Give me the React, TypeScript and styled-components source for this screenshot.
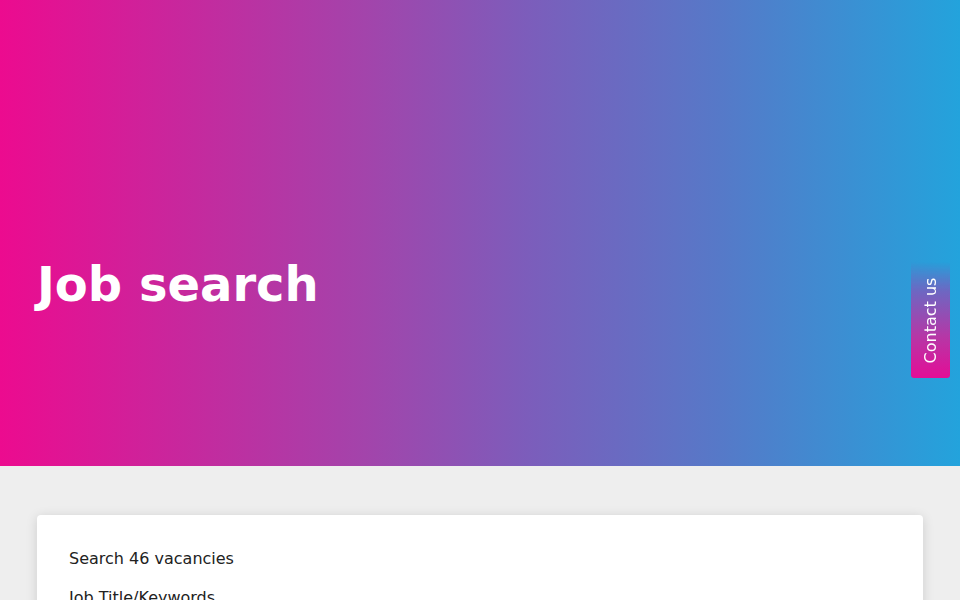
import React from "react";
import styled, { createGlobalStyle } from "styled-components";

const Global = createGlobalStyle`
  html, body { margin: 0; padding: 0; }
  body {
    background: #eeeeee;
    font-family: "DejaVu Sans", sans-serif;
    color: #222;
    overflow: hidden;
  }
`;

const Hero = styled.header`
  height: 466px;
  display: flex;
  align-items: center;
  padding: 0 37px;
  box-sizing: border-box;
  background: linear-gradient(90deg, #ec0b8f 0%, #a344ab 38%, #7c5dbb 55%, #5679c8 75%, #23a3dc 100%);
`;

const Title = styled.h1`
  margin: 0;
  padding-top: 104px;
  font-family: "DejaVu Sans", sans-serif;
  font-weight: 700;
  font-size: 48px;
  line-height: 1.2;
  color: #fff;
`;

const ContactTab = styled.a`
  position: fixed;
  right: 10px;
  top: 262px;
  width: 39px;
  height: 116px;
  display: flex;
  align-items: center;
  justify-content: center;
  border-radius: 0 0 3px 3px;
  background: linear-gradient(180deg, rgba(35, 163, 220, 0) 0%, #6d67c2 25%, #b736a6 65%, #e40d96 100%);
  color: #fff;
  text-decoration: none;
`;

const ContactText = styled.span`
  display: block;
  transform: rotate(-90deg);
  white-space: nowrap;
  font-size: 16px;
  margin-top: 0px;
`;

const Main = styled.main`
  padding: 49px 37px 0;
`;

const Card = styled.section`
  background: #fff;
  border-radius: 4px;
  box-shadow: 0 2px 12px rgba(0, 0, 0, 0.14);
  padding: 32px 32px 40px;
  display: flex;
  flex-direction: column;
  gap: 15px;
`;

const Label = styled.div`
  font-size: 16px;
  line-height: 24px;
  color: #222;
`;

export default function App() {
  return (
    <>
      <Global />
      <Hero>
        <Title>Job search</Title>
      </Hero>
      <ContactTab href="#">
        <ContactText>Contact us</ContactText>
      </ContactTab>
      <Main>
        <Card>
          <Label>Search 46 vacancies</Label>
          <Label>Job Title/Keywords</Label>
        </Card>
      </Main>
    </>
  );
}
